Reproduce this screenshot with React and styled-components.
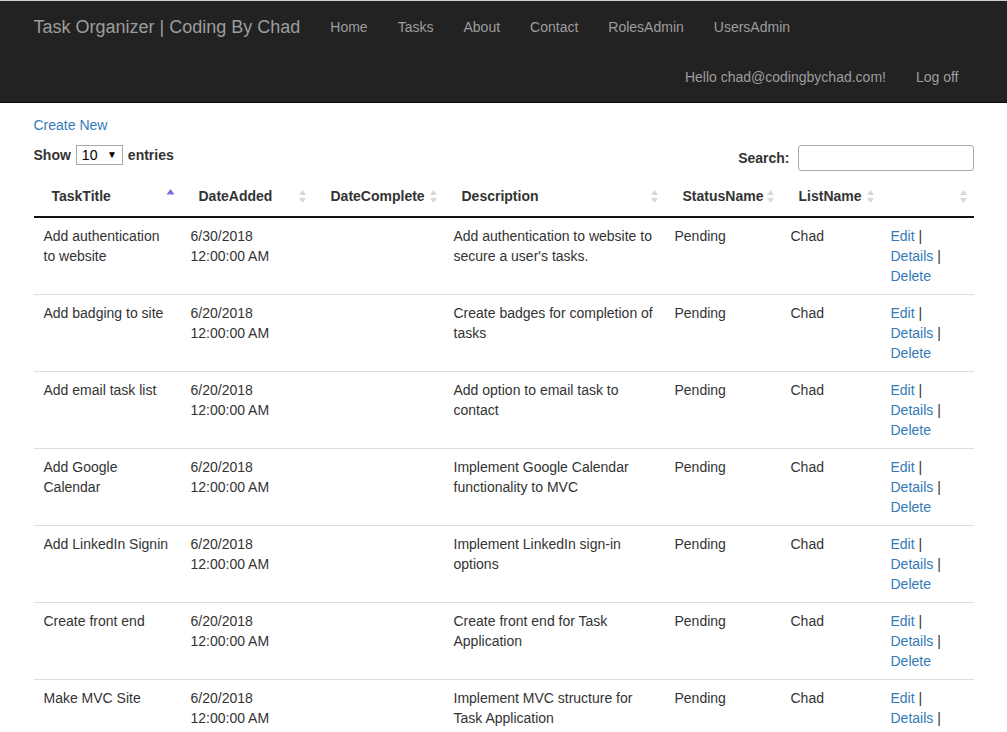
import React from 'react'
import styled, { createGlobalStyle } from 'styled-components'

const GlobalStyle = createGlobalStyle`
    body {
        margin: 0;
        font-family: 'Liberation Sans', Arial, sans-serif;
        font-size: 14px;
        line-height: 20px;
        color: #333;
        background: #fff;
    }
`

const Navbar = styled.nav`
    border-top: 1px solid #cfcfcf;
    padding-top: 1px;
    background-color: #222;
    border-bottom: 1px solid #080808;
`

const Container = styled.div`
    width: 940px;
    margin: 0 auto;
`

const NavRow = styled.div`
    display: flex;
    height: 50px;
    justify-content: ${props => (props.right ? 'flex-end' : 'flex-start')};
`

const Brand = styled.a`
    padding: 15px 15px 15px 0;
    font-size: 18px;
    line-height: 20px;
    color: #9d9d9d;
    text-decoration: none;
`

const NavLink = styled.a`
    padding: 15px;
    line-height: 20px;
    color: #9d9d9d;
    text-decoration: none;
`

const Body = styled.div`
    width: 940px;
    margin: 0 auto;
    padding-top: 12px;
`

const CreateLink = styled.a`
    display: block;
    color: #337ab7;
    text-decoration: none;
    margin-bottom: 10px;
`

const Toolbar = styled.div`
    display: flex;
    justify-content: space-between;
    align-items: flex-start;
`

const Label = styled.label`
    display: flex;
    align-items: center;
    font-weight: bold;
    gap: ${props => (props.wide ? '5px' : '3px')};
`

const SelectWrap = styled.span`
    position: relative;
    display: inline-block;
`

const Select = styled.select`
    appearance: none;
    width: 47px;
    height: 20px;
    padding: 0 0 0 5px;
    border: 1px solid #a9a9a9;
    background: #fff;
    font-family: inherit;
    font-size: 14px;
    color: #000;
`

const Caret = styled.span`
    position: absolute;
    right: 6px;
    top: 0;
    font-size: 10px;
    color: #000;
    pointer-events: none;
`

const SearchInput = styled.input`
    width: 176px;
    height: 26px;
    box-sizing: border-box;
    margin-left: 5px;
    border: 1px solid #aaa;
    border-radius: 3px;
    padding: 4px;
`

const Table = styled.table`
    width: 100%;
    margin-top: 5px;
    border-collapse: collapse;
    table-layout: fixed;
`

const Th = styled.th`
    padding: 10px 6px 10px 18px;
    text-align: left;
    font-weight: bold;
    border-bottom: 2px solid #111;
`

const ThInner = styled.div`
    display: flex;
    justify-content: space-between;
    align-items: center;
`

const Td = styled.td`
    padding: 8px 10px;
    vertical-align: top;
    border-top: 1px solid #ddd;
`

const ActionLink = styled.a`
    color: #337ab7;
    text-decoration: none;
`

const SortIcon = ({ active }) => (
    <svg width="9" height="15" viewBox="0 0 9 15">
        {active ? (
            <polygon points="4.5,0 0.5,5.5 8.5,5.5" fill="#7474d6" />
        ) : (
            <>
                <polygon points="4.5,1 1,6 8,6" fill="#d8d8d8" />
                <polygon points="1,9 8,9 4.5,14" fill="#d8d8d8" />
            </>
        )}
    </svg>
)

const columns = [
    { title: 'TaskTitle', width: 147, active: true },
    { title: 'DateAdded', width: 132 },
    { title: 'DateComplete', width: 131 },
    { title: 'Description', width: 221 },
    { title: 'StatusName', width: 116 },
    { title: 'ListName', width: 100 },
    { title: '', width: 93 },
]

const tasks = [
    ['Add authentication to website', '6/30/2018', "Add authentication to website to secure a user's tasks."],
    ['Add badging to site', '6/20/2018', 'Create badges for completion of tasks'],
    ['Add email task list', '6/20/2018', 'Add option to email task to contact'],
    ['Add Google Calendar', '6/20/2018', 'Implement Google Calendar functionality to MVC'],
    ['Add LinkedIn Signin', '6/20/2018', 'Implement LinkedIn sign-in options'],
    ['Create front end', '6/20/2018', 'Create front end for Task Application'],
    ['Make MVC Site', '6/20/2018', 'Implement MVC structure for Task Application'],
]

const App = () => (
    <>
        <GlobalStyle />
        <Navbar>
            <Container>
                <NavRow>
                    <Brand href="#">Task Organizer | Coding By Chad</Brand>
                    {['Home', 'Tasks', 'About', 'Contact', 'RolesAdmin', 'UsersAdmin'].map(l => (
                        <NavLink key={l} href="#">{l}</NavLink>
                    ))}
                </NavRow>
                <NavRow right>
                    <NavLink href="#">Hello chad@codingbychad.com!</NavLink>
                    <NavLink href="#">Log off</NavLink>
                </NavRow>
            </Container>
        </Navbar>
        <Body>
            <CreateLink href="#">Create New</CreateLink>
            <Toolbar>
                <Label wide>
                    Show
                    <SelectWrap>
                        <Select defaultValue="10">
                            <option>10</option>
                            <option>25</option>
                            <option>50</option>
                            <option>100</option>
                        </Select>
                        <Caret>▼</Caret>
                    </SelectWrap>
                    entries
                </Label>
                <Label>
                    Search:
                    <SearchInput type="search" />
                </Label>
            </Toolbar>
            <Table>
                <colgroup>
                    {columns.map((c, i) => <col key={i} style={{ width: c.width }} />)}
                </colgroup>
                <thead>
                    <tr>
                        {columns.map((c, i) => (
                            <Th key={i}>
                                <ThInner>
                                    <span>{c.title}</span>
                                    <SortIcon active={c.active} />
                                </ThInner>
                            </Th>
                        ))}
                    </tr>
                </thead>
                <tbody>
                    {tasks.map(([title, date, desc]) => (
                        <tr key={title}>
                            <Td>{title}</Td>
                            <Td>{date} 12:00:00 AM</Td>
                            <Td></Td>
                            <Td>{desc}</Td>
                            <Td>Pending</Td>
                            <Td>Chad</Td>
                            <Td>
                                <ActionLink href="#">Edit</ActionLink> |{' '}
                                <ActionLink href="#">Details</ActionLink> |{' '}
                                <ActionLink href="#">Delete</ActionLink>
                            </Td>
                        </tr>
                    ))}
                </tbody>
            </Table>
        </Body>
    </>
)

export default App
